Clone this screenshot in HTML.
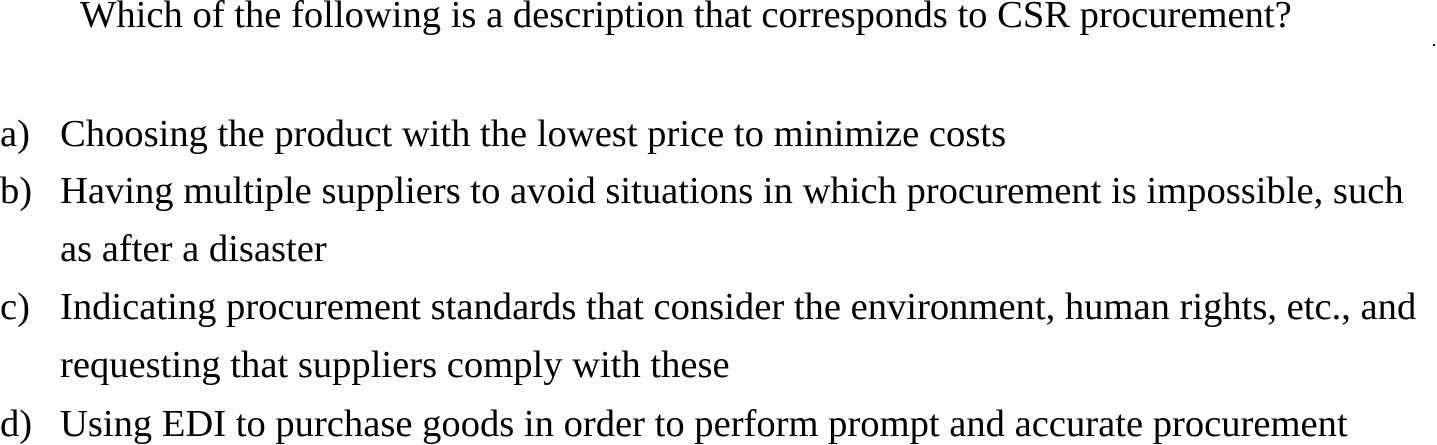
<!DOCTYPE html>
<html><head><style>
html,body{margin:0;padding:0;background:#fff;width:1437px;height:445px;overflow:hidden;position:relative}
div{position:absolute;font-family:"Liberation Serif",serif;font-size:38.6px;line-height:58px;color:#000;white-space:nowrap}
</style></head><body>
<div style="left:80px;top:-14px">Which of the following is a description that corresponds to CSR procurement?</div>
<div style="left:1433px;top:44px;width:2px;height:2px;background:#000"></div>
<div style="left:0;top:105px">a)</div><div style="left:60px;top:105px">Choosing the product with the lowest price to minimize costs</div>
<div style="left:0;top:162px">b)</div><div style="left:60px;top:162px">Having multiple suppliers to avoid situations in which procurement is impossible, such</div>
<div style="left:60px;top:220px">as after a disaster</div>
<div style="left:0;top:278px">c)</div><div style="left:60px;top:278px">Indicating procurement standards that consider the environment, human rights, etc., and</div>
<div style="left:60px;top:336px">requesting that suppliers comply with these</div>
<div style="left:0;top:395px">d)</div><div style="left:60px;top:395px">Using EDI to purchase goods in order to perform prompt and accurate procurement</div>
</body></html>
